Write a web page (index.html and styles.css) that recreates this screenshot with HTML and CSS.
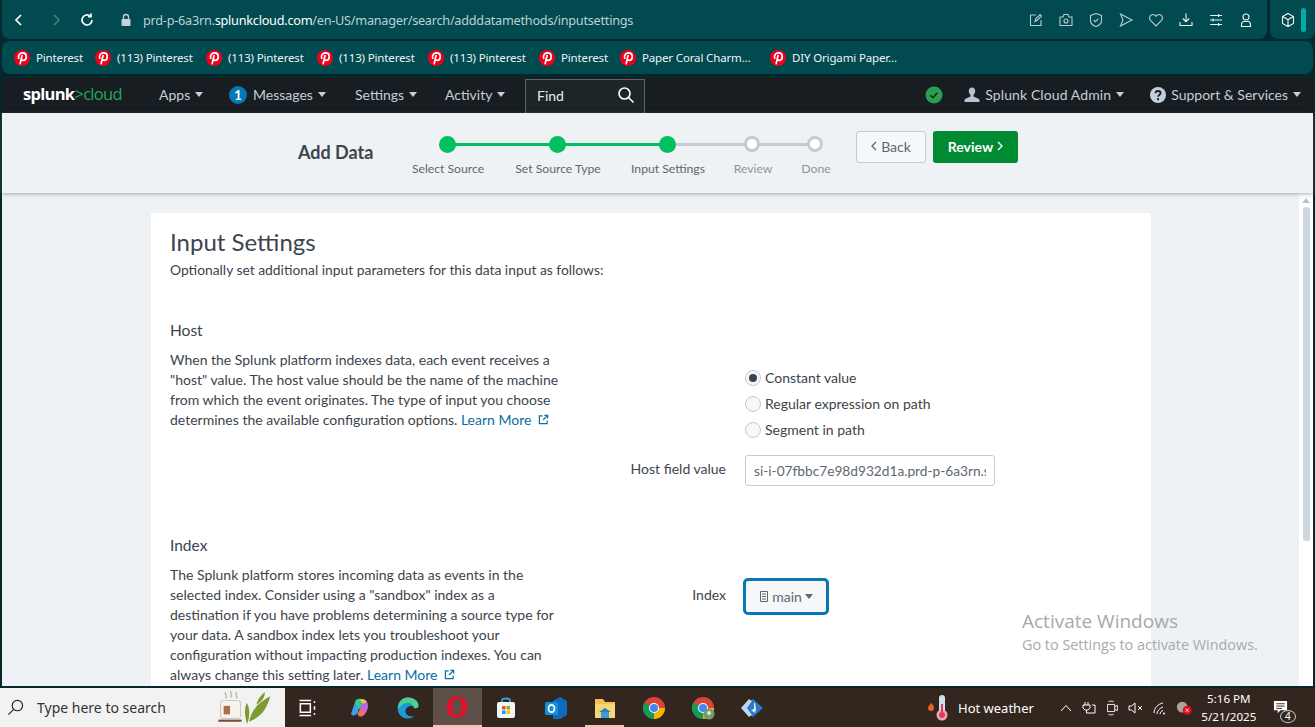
FILE: index.html
```html
<!DOCTYPE html>
<html lang="en">
<head>
<meta charset="utf-8">
<title>Add Data - Input Settings</title>
<link rel="stylesheet" href="styles.css">
</head>
<body>
<svg class="defs" width="0" height="0" aria-hidden="true">
  <symbol id="pin" viewBox="0 0 16 16">
    <circle cx="8" cy="8" r="8" fill="#f0001c"/>
    <path d="M4.700 8.200C3.700 5.200 5.900 2.900 8.400 2.900c2.300 0 3.800 1.500 3.800 3.500 0 2.300-1.400 3.900-3 3.900-1 0-1.600-.5-1.900-1.200M8 5.500 6.200 13.600" fill="none" stroke="#fff" stroke-width="1.700" stroke-linecap="round"/>
  </symbol>
  <symbol id="caret" viewBox="0 0 8 5"><path d="M0 0h8L4 5z" fill="currentColor"/></symbol>
</svg>

<header class="chrome-bar">
  <div class="chrome-main">
    <nav class="chrome-nav">
      <svg class="ci" viewBox="0 0 16 16"><path d="M10 3 5 8l5 5" stroke="#fff"/></svg>
      <svg class="ci ci-next" viewBox="0 0 16 16"><path d="m6 3 5 5-5 5" stroke="#4f7a7d"/></svg>
      <svg class="ci" viewBox="0 0 16 16"><path d="M13 8a5 5 0 1 1-1.600-3.700M12 1.600v3h-3" stroke="#fff"/></svg>
    </nav>
    <svg class="lock" viewBox="0 0 12 14"><path d="M3.500 6V4a2.500 2.500 0 0 1 5 0v2" fill="none" stroke="#c7d3d4" stroke-width="1.300"/><rect x="1.500" y="6" width="9" height="7" rx="1" fill="#c7d3d4"/></svg>
    <div class="url">prd-p-6a3rn.<b>splunkcloud.com</b>/en-US/manager/search/adddatamethods/inputsettings</div>
    <div class="chrome-tools">
      <svg class="ti" viewBox="0 0 16 16"><path d="M13 8v5.500H2.500V3H8M7 9.500l1-3L12 2.500l1.500 1.500-4 4z"/></svg>
      <svg class="ti" viewBox="0 0 16 16"><path d="M2 5h3l1-2.500h4L11 5h3v8.500H2z"/><circle cx="8" cy="9" r="2"/></svg>
      <svg class="ti" viewBox="0 0 16 16"><path d="M8 1.500 13.500 3.500v5c0 3-2.500 5-5.500 6-3-1-5.500-3-5.500-6v-5zM5.700 8l1.700 1.700 3-3"/></svg>
      <svg class="ti" viewBox="0 0 16 16"><path d="M2.500 2 14 8 2.500 14 5 8z"/></svg>
      <svg class="ti" viewBox="0 0 16 16"><path d="M8 14 2.500 8.500C.5 6 2 2.500 5 2.500c1.300 0 2.300.7 3 1.800.7-1.100 1.700-1.800 3-1.800 3 0 4.500 3.500 2.500 6z"/></svg>
      <svg class="ti ti-bright" viewBox="0 0 16 16"><path d="M8 1.500v8M4.800 6.500 8 9.700l3.200-3.200M2 10v3.500h12V10"/></svg>
      <svg class="ti ti-bright" viewBox="0 0 16 16"><path d="M2 3.500h12M2 8h12M2 12.500h12M10.500 2v3M5 6.500v3M10.500 11v3"/></svg>
      <svg class="ti ti-bright" viewBox="0 0 16 16"><circle cx="8" cy="5" r="3"/><path d="M3.500 14.500v-2c0-2 1.500-3 2.500-3h4c1 0 2.500 1 2.500 3v2z"/></svg>
    </div>
  </div>
  <div class="chrome-ext">
    <svg class="ti ti-bright" viewBox="0 0 16 16"><path d="M8 1.500 13.500 4.500v7L8 14.500l-5.500-3v-7zM2.500 4.500 8 7.500l5.500-3M8 7.500v7"/></svg>
    <span class="ext-bar"></span>
  </div>
</header>

<div class="bookmarks">
  <a class="bm bm-1"><svg class="pin"><use href="#pin"/></svg>Pinterest</a>
  <a class="bm bm-2"><svg class="pin"><use href="#pin"/></svg>(113) Pinterest</a>
  <a class="bm bm-2"><svg class="pin"><use href="#pin"/></svg>(113) Pinterest</a>
  <a class="bm bm-2"><svg class="pin"><use href="#pin"/></svg>(113) Pinterest</a>
  <a class="bm bm-2"><svg class="pin"><use href="#pin"/></svg>(113) Pinterest</a>
  <a class="bm bm-1"><svg class="pin"><use href="#pin"/></svg>Pinterest</a>
  <a class="bm bm-3"><svg class="pin"><use href="#pin"/></svg>Paper Coral Charm...</a>
  <a class="bm"><svg class="pin"><use href="#pin"/></svg>DIY Origami Paper...</a>
</div>

<nav class="splunk-nav">
  <div class="logo">splunk<span class="logo-g">&gt;cloud</span></div>
  <a class="nav-item nav-apps">Apps<svg class="caret"><use href="#caret"/></svg></a>
  <a class="nav-item nav-msg"><span class="badge">1</span>Messages<svg class="caret"><use href="#caret"/></svg></a>
  <a class="nav-item nav-set">Settings<svg class="caret"><use href="#caret"/></svg></a>
  <a class="nav-item nav-act">Activity<svg class="caret"><use href="#caret"/></svg></a>
  <div class="find"><span>Find</span>
    <svg class="find-icon" viewBox="0 0 18 18"><circle cx="7.500" cy="7.500" r="5.500"/><path d="m11.500 11.500 5 5"/></svg>
  </div>
  <div class="nav-right">
    <svg class="ok" viewBox="0 0 18 18"><circle cx="9" cy="9" r="8.500" fill="#28a04f"/><path d="m5.500 9.300 2.400 2.400 4.500-5" fill="none" stroke="#10241a" stroke-width="1.500"/></svg>
    <a class="nav-item nav-user"><svg class="user" viewBox="0 0 16 16"><path d="M8 .5c2 0 3.200 1.500 3.200 3.500 0 1.600-.8 3.200-1.700 4v1.500l5 2.200c.7.400 1 1 1 1.800v1.500H.5V13.500c0-.8.300-1.400 1-1.800l5-2.200V8c-.9-.8-1.700-2.400-1.700-4C4.800 2 6 .5 8 .5z" fill="#b5c3d2"/></svg>Splunk Cloud Admin<svg class="caret"><use href="#caret"/></svg></a>
    <a class="nav-item nav-sup"><svg class="help" viewBox="0 0 16 16"><circle cx="8" cy="8" r="8" fill="#c3cfdb"/><path d="M5.500 6.200C5.600 4.700 6.700 4 8 4c1.500 0 2.600.8 2.600 2.100 0 1.800-2.500 1.800-2.500 3.600" fill="none" stroke="#171d21" stroke-width="1.800"/><circle cx="8.100" cy="12.200" r="1.100" fill="#171d21"/></svg>Support &amp; Services<svg class="caret"><use href="#caret"/></svg></a>
  </div>
</nav>

<main class="viewport">
  <section class="wizard">
    <h1 class="wizard-title">Add Data</h1>
    <ol class="steps">
      <li class="step step-done step-a"><i class="dot"></i><span>Select Source</span></li>
      <li class="step step-done step-b"><i class="dot"></i><span>Set Source Type</span></li>
      <li class="step step-done step-c"><i class="dot"></i><span>Input Settings</span></li>
      <li class="step step-d"><i class="dot"></i><span>Review</span></li>
      <li class="step step-e"><i class="dot"></i><span>Done</span></li>
    </ol>
    <div class="wizard-btns">
      <button class="btn btn-back"><svg class="chev" viewBox="0 0 6 10"><path d="M5 1 1 5l4 4"/></svg>Back</button>
      <button class="btn btn-next">Review<svg class="chev" viewBox="0 0 6 10"><path d="m1 1 4 4-4 4"/></svg></button>
    </div>
  </section>

  <div class="scroller">
    <article class="card">
      <h2 class="page-title">Input Settings</h2>
      <p class="page-sub">Optionally set additional input parameters for this data input as follows:</p>

      <section class="sec sec-host">
        <div class="sec-text">
          <h3>Host</h3>
          <p>When the Splunk platform indexes data, each event receives a "host" value. The host value should be the name of the machine from which the event originates. The type of input you choose determines the available configuration options. <a class="more">Learn More <svg class="ext" viewBox="0 0 12 12"><path d="M5 2H1.500v8.500H10V7M7 1.500h3.500V5M10.500 1.500 5.500 6.500"/></svg></a></p>
        </div>
        <div class="sec-ctl host-ctl">
          <label class="radio"><i class="rd rd-on"></i>Constant value</label>
          <label class="radio"><i class="rd"></i>Regular expression on path</label>
          <label class="radio"><i class="rd"></i>Segment in path</label>
          <div class="field host-field"><span class="field-label">Host field value</span><div class="input"><span class="input-text">si-i-07fbbc7e98d932d1a.prd-p-6a3rn.s</span></div></div>
        </div>
      </section>

      <section class="sec sec-index">
        <div class="sec-text">
          <h3>Index</h3>
          <p>The Splunk platform stores incoming data as events in the selected index. Consider using a "sandbox" index as a destination if you have problems determining a source type for your data. A sandbox index lets you troubleshoot your configuration without impacting production indexes. You can always change this setting later. <a class="more">Learn More <svg class="ext" viewBox="0 0 12 12"><path d="M5 2H1.500v8.500H10V7M7 1.500h3.500V5M10.500 1.500 5.500 6.500"/></svg></a></p>
        </div>
        <div class="sec-ctl">
          <div class="field"><span class="field-label">Index</span>
            <button class="select"><svg class="db" viewBox="0 0 10 11"><path d="M1.500.5h7v10h-7zM3 3h4M3 5.500h4M3 8h4"/></svg>main<svg class="caret caret-dark"><use href="#caret"/></svg></button>
          </div>
        </div>
      </section>
    </article>
    <div class="scrollbar"><svg class="sb-up" viewBox="0 0 8 5"><path d="M0 5 4 0l4 5z"/></svg><span class="sb-thumb"></span></div>
  </div>
  <div class="watermark"><div class="wm-1">Activate Windows</div><div class="wm-2">Go to Settings to activate Windows.</div></div>
</main>

<footer class="taskbar">
  <div class="search">
    <svg class="search-ic" viewBox="0 0 18 18"><circle cx="11" cy="7" r="5.500"/><path d="M7 11 1.500 16.500"/></svg>
    <span>Type here to search</span>
    <svg class="tea" viewBox="0 0 56 34"><path d="M7 2c-2 2 2 3 0 6M12 1c-2 2 2 3 0 6M17 2c-2 2 2 3 0 6" fill="none" stroke="#b5b0a8" stroke-width="1.200"/><rect x="2" y="10" width="19" height="17" rx="3" fill="#f6f3ee" stroke="#cfc8bd"/><rect x="5" y="15" width="6" height="8" fill="#a8714b"/><rect x="0" y="28" width="22" height="2" fill="#7a4c34"/><path d="M27 32c-2-8-3-14 0-20 3 6 3 13 0 20zM29 30c2-10 8-18 20-24-3 12-9 20-20 24zM36 14c1-4 3-8 8-12 0 5-3 9-8 12z" fill="#7f9a2e"/></svg>
  </div>
  <div class="tb-apps">
    <span class="tb-app"><svg class="tb-ic tb-view" viewBox="0 0 24 24"><path d="M3 3h14M3 21h14M4 7h12v10H4zM21 4v2M21 10v4M21 18v2" fill="none" stroke="#fff" stroke-width="1.800"/></svg></span>
    <span class="tb-app"><svg class="tb-ic" viewBox="0 0 24 24"><path d="M4 18 8 6c1-3 4-4 6-3l-3 13c-1 3-5 5-7 2z" fill="#3aa0e8"/><path d="M8 6c1-3 4-4 6-3l3 1-5 10z" fill="#38c98a"/><path d="M20 6c2 3 1 9-3 13-2 2-5 2-6 0l4-13c1-2 4-2 5 0z" fill="#c064e0"/><path d="M11 19c-1-2 0-4 3-5l5 1c-1 3-4 7-8 4z" fill="#f2705a"/><path d="M13 4c2-2 5-1 7 2l-4 2z" fill="#e8c53a"/></svg></span>
    <span class="tb-app"><svg class="tb-ic" viewBox="0 0 24 24"><path d="M12 1.500C5.500 1.500 1.500 6.500 1.500 12c0 6 4.500 10.500 10 10.500 3 0 5-.8 7-2.500-5 1.500-9-1-9-5 0-3 2.500-5 6-5 3 0 6.800 1.500 7-1C22.500 5 17.500 1.500 12 1.500z" fill="#1c9ad6"/><path d="M12 1.500c5.500 0 10.500 3.500 10.500 8.500 0 2-2.500 2.500-4.500 2-1-4-4-6-8-5-3 .7-6 3-7.500 6-.5-6 3.500-11.500 9.500-11.500z" fill="#4fd08a"/></svg></span>
    <span class="tb-app tb-active"><svg class="tb-ic" viewBox="0 0 24 24"><ellipse cx="12" cy="12" rx="10.500" ry="11" fill="#e0112b"/><ellipse cx="12" cy="12" rx="4.500" ry="8.500" fill="#5c5048"/></svg></span>
    <span class="tb-app"><svg class="tb-ic" viewBox="0 0 24 24"><path d="M8 7V4c0-2 8-2 8 0v3" fill="none" stroke="#29a9e0" stroke-width="1.800"/><rect x="3" y="6" width="18" height="16" rx="2" fill="#f4f4f4"/><rect x="8" y="10" width="3.500" height="3.500" fill="#f25022"/><rect x="12.500" y="10" width="3.500" height="3.500" fill="#7fba00"/><rect x="8" y="14.500" width="3.500" height="3.500" fill="#00a4ef"/><rect x="12.500" y="14.500" width="3.500" height="3.500" fill="#ffb900"/></svg></span>
    <span class="tb-app"><svg class="tb-ic" viewBox="0 0 24 24"><path d="M9 5 16 1l7 4v14l-7 4H9z" fill="#0f6cbd"/><rect x="1" y="6" width="13" height="13" rx="1.500" fill="#1490df"/><ellipse cx="7.500" cy="12.500" rx="3" ry="3.700" fill="none" stroke="#fff" stroke-width="1.700"/></svg></span>
    <span class="tb-app tb-running"><svg class="tb-ic" viewBox="0 0 24 24"><path d="M2 3h8l2 3h10v16H2z" fill="#f2c14e"/><rect x="2" y="8" width="20" height="14" fill="#f7d774"/><path d="M8 16h8v6H8z" fill="#3b9be0"/><path d="M6 16l6-4 6 4z" fill="#2a7fc0"/></svg></span>
    <span class="tb-app"><svg class="tb-ic" viewBox="0 0 24 24"><circle cx="12" cy="12" r="11" fill="#db4437"/><path d="M12 23A11 11 0 0 1 2.500 6.500L12 12z" fill="#0f9d58"/><path d="M12 12h11A11 11 0 0 1 12 23z" fill="#f4b400"/><circle cx="12" cy="12" r="5" fill="#fff"/><circle cx="12" cy="12" r="4" fill="#4285f4"/></svg></span>
    <span class="tb-app"><svg class="tb-ic" viewBox="0 0 24 24"><circle cx="12" cy="12" r="11" fill="#db4437"/><path d="M12 23A11 11 0 0 1 2.500 6.500L12 12z" fill="#0f9d58"/><path d="M12 12h11A11 11 0 0 1 12 23z" fill="#f4b400"/><circle cx="12" cy="12" r="5" fill="#fff"/><circle cx="12" cy="12" r="4" fill="#4285f4"/><circle cx="18" cy="18" r="5.500" fill="#6f9e6f"/><circle cx="18" cy="17" r="2" fill="#dfeadf"/></svg></span>
    <span class="tb-app"><svg class="tb-ic" viewBox="0 0 24 24"><path d="M13 3 23 12l-10 9-10-9z" fill="#2a78c8"/><path d="M9 3 1 12l8 9 3-2-5-7 5-7z" fill="#bcd6ee"/><path d="M14 7v6l-3 1 4 3 1-4-1-6z" fill="#dcebf7"/></svg></span>
  </div>
  <div class="weather">
    <svg class="therm" viewBox="0 0 22 28"><path d="M4 9c2 2 3 3 3 5a3 3 0 0 1-6 0c0-2 2-3 3-5z" fill="#e8622c"/><rect x="12" y="1" width="6" height="20" rx="3" fill="#cfe0ee"/><circle cx="15" cy="21" r="5.500" fill="#f2a7b5"/><circle cx="15" cy="21" r="3" fill="#e23c5a"/><rect x="14" y="10" width="2" height="10" fill="#e23c5a"/></svg>
    <span>Hot weather</span>
  </div>
  <div class="tray">
    <svg class="tr tr-chev" viewBox="0 0 12 8"><path d="M1 7 6 1.500 11 7"/></svg>
    <svg class="tr" viewBox="0 0 16 14"><path d="M5 1v3M8 1v3M3 4h7v3L8 9H5L3 7zM6.500 9v3H15V4h-3"/></svg>
    <svg class="tr" viewBox="0 0 16 18"><path d="M3 5h8v8H3zM11 7.500l3-1.500v6l-3-1.500M4 2c2-1 4-1 6 0M4 16c2 1 4 1 6 0"/></svg>
    <svg class="tr" viewBox="0 0 16 14"><path d="M1 5h2.500L7 2v10L3.500 9H1zM10 5l4 4M14 5l-4 4"/></svg>
    <svg class="tr tr-wifi" viewBox="0 0 16 14"><path d="M2 12C2 7 6 3 11 2M5 13c0-3 3-6 6-7M8 13c0-1.500 1.500-3 3-3.500"/><circle cx="12" cy="12.500" r="1" fill="#fff"/></svg>
    <svg class="tr tr-net" viewBox="0 0 18 16"><circle cx="7" cy="7" r="6" fill="#a9a6a3" stroke="none"/><circle cx="12.500" cy="10.500" r="5" fill="#e81123" stroke="none"/><path d="m10.800 8.800 3.400 3.400M14.200 8.800l-3.400 3.400" stroke="#fff"/></svg>
  </div>
  <div class="clock"><div>5:16 PM</div><div>5/21/2025</div></div>
  <div class="notif">
    <svg class="notif-ic" viewBox="0 0 16 16"><path d="M1 1h14v10H8l-3 3v-3H1z" fill="#fff"/><path d="M3.500 4h9M3.500 6.500h9M3.500 9h6" stroke="#33261f"/></svg>
    <span class="notif-n">4</span>
  </div>
</footer>
</body>
</html>
```
FILE: styles.css
```css
* { box-sizing: border-box; }
html, body { margin: 0; padding: 0; }
body {
  width: 1315px; height: 727px; overflow: hidden;
  background: #06282c;
  font-family: "Open Sans", "Liberation Sans", sans-serif;
  display: flex; flex-direction: column; position: relative;
}
.defs { position: absolute; }
a { color: inherit; text-decoration: none; }

/* browser chrome */
.chrome-bar { height: 39px; margin: 0 0 2px 2px; flex: none; display: flex; gap: 3px; color: #c9d6d7; }
.chrome-main { flex: 1; min-width: 0; display: flex; align-items: center; background: #004a50; border-radius: 0 0 8px 8px; }
.chrome-nav { display: flex; margin-left: 9px; width: 108px; flex: none; }
.ci { width: 16px; height: 16px; flex: none; }
.ci-next { margin: 0 15px 0 21px; }
.ci path { fill: none; stroke-width: 1.700; }
.lock { width: 12px; height: 14px; margin-left: 1px; flex: none; }
.url { margin-left: 11px; font-size: 12.700px; color: #bfd0d1; white-space: nowrap; font-family: "Noto Sans", sans-serif; letter-spacing: -.25px; flex: 1; }
.url b { font-weight: 400; color: #fff; }
.chrome-tools { display: flex; gap: 14px; margin-right: 13px; flex: none; }
.ti { width: 16px; height: 16px; flex: none; }
.ti path, .ti circle { fill: none; stroke: #bccbcc; stroke-width: 1.100; }
.ti-bright path, .ti-bright circle { stroke: #eef4f4; }
.chrome-ext {
  width: 45px; height: 39px; background: #004a50; border-radius: 0 0 8px 8px;
  display: flex; align-items: center; gap: 5px; padding-left: 10px; flex: none;
}
.ext-bar { width: 5px; height: 24px; border-radius: 3px; background: #06aaa5; }

.bookmarks {
  height: 33px; margin: 0 2px 0 2px; padding-left: 12px; flex: none;
  display: flex; align-items: center; border-radius: 8px;
  background: #004a50; color: #eef4f4; font-size: 11.500px; letter-spacing: -.15px; white-space: nowrap;
  font-family: "Noto Sans", sans-serif;
}
.bm { display: flex; align-items: center; gap: 6px; width: 111px; flex: none; }
.bm-1 { width: 81px; }
.bm-3 { width: 150px; }
.pin { width: 16px; height: 16px; flex: none; }

/* splunk nav */
.splunk-nav {
  height: 35px; margin: 4px 2px 0 2px; padding: 0 0 2px 21px; flex: none;
  display: flex; align-items: center; position: relative;
  background: #171d21; color: #c3cfdb; font-family: "Lato", sans-serif; font-size: 14px;
  border-radius: 4px 4px 0 0;
}
.logo { width: 136px; font-size: 16.500px; font-weight: 700; color: #fff; letter-spacing: -.7px; flex: none; font-family: "Open Sans", sans-serif; margin-bottom: 2px; }
.logo-g { color: #1faa5a; font-weight: 400; }
.nav-item { display: flex; align-items: center; gap: 5px; white-space: nowrap; flex: none; }
.nav-apps { width: 70px; }
.nav-msg { width: 126px; }
.nav-set { width: 90px; }
.nav-act { width: 80px; }
.caret { width: 8px; height: 5px; color: #c3cfdb; flex: none; }
.badge {
  width: 18px; height: 18px; margin-right: 1px; border-radius: 50%; background: #0877b6; color: #fff;
  display: flex; align-items: center; justify-content: center; font-size: 13px; font-weight: 700;
}
.find {
  width: 120px; height: 34px; margin-bottom: -2px; padding: 0 9px 2px 11px; border: 1px solid #59636b; border-bottom: 0; background: #1e2529; color: #e6ebef;
  display: flex; align-items: center; justify-content: space-between; flex: none;
}
.find-icon { width: 18px; height: 18px; }
.find-icon circle, .find-icon path { fill: none; stroke: #fff; stroke-width: 1.600; }
.nav-right { margin-left: auto; display: flex; align-items: center; padding-right: 12px; }
.ok { width: 18px; height: 18px; margin-right: 21px; }
.nav-user { margin-right: 26px; gap: 5px; letter-spacing: .1px; }
.nav-sup { gap: 5px; }
.user { width: 16px; height: 16px; }
.help { width: 16px; height: 16px; }

/* wizard */
.viewport { flex: 1; min-height: 0; margin: 0 2px 0 2px; display: flex; flex-direction: column; position: relative; background: #eff2f4; font-family: "Lato", sans-serif; }
.wizard {
  height: 80px; flex: none; position: relative; z-index: 1; padding-left: 296px;
  display: flex; align-items: flex-start; background: #eff2f4; box-shadow: 0 1px 4px rgba(90,110,125,.55);
}
.wizard-title { margin: 28px 0 0 0; width: 110px; flex: none; font-size: 18px; font-weight: 700; color: #3c444d; }
.steps { list-style: none; margin: 0 0 0 39px; padding: 0; height: 80px; width: 368px; display: flex; flex: none; position: relative; }
.step { position: relative; flex: none; color: #5c6773; font-size: 12.200px; }
.step span { white-space: nowrap; position: absolute; top: 48px; left: 1px; transform: translateX(-50%); }
.dot { position: absolute; top: 23px; left: 0; width: 17px; height: 17px; margin-left: -8px; border-radius: 50%; background: #00c060; z-index: 1; }
.step::before { content: ""; position: absolute; top: 30px; left: 0; width: 100%; height: 3px; background: #c3cbd4; }
.step-a, .step-b { width: 110px; }
.step-c { width: 85px; }
.step-d { width: 63px; }
.step-e { width: 0; }
.step-a::before, .step-b::before { background: #00c060; }
.step-e::before { display: none; }
.step-d .dot, .step-e .dot { background: #fff; border: 3px solid #c3cbd4; width: 16px; height: 16px; }
.step-d, .step-e { color: #8a95a0; }
.wizard-btns { display: flex; gap: 7px; margin-top: 18px; margin-left: 41px; }
.btn { height: 32px; border-radius: 3px; font: inherit; font-size: 14px; display: flex; align-items: center; justify-content: center; gap: 4px; padding: 0 0 2px 0; }
.btn-back { width: 70px; border: 1px solid #c3cbd4; background: #f5f7f9; color: #5c6773; }
.btn-next { width: 85px; border: 0; background: #008a32; color: #fff; font-weight: 700; }
.chev { width: 6px; height: 10px; }
.chev path { fill: none; stroke: currentColor; stroke-width: 1.300; }

/* content */
.scroller { flex: 1; min-height: 0; display: flex; padding-left: 149px; padding-top: 20px; overflow: hidden; position: relative; }
.card { width: 1000px; flex: none; height: 700px; background: #fff; padding: 14px 20px 0 19px; color: #3c444d; font-size: 14px; line-height: 20px; }
.page-title { margin: 0; font-size: 24px; line-height: 30px; font-weight: 400; color: #3c444d; }
.page-sub { margin: 3px 0 0 0; font-size: 13.850px; }
.sec { display: flex; margin-top: 38px; }
.sec-text { width: 395px; flex: none; }
.sec h3 { margin: 0 0 8px 0; font-size: 15.500px; line-height: 24px; font-weight: 400; }
.sec p { margin: 0; }
.more { color: #0a6ea3; white-space: nowrap; }
.ext { width: 11px; height: 11px; margin-left: 3px; }
.ext path { fill: none; stroke: #0a6ea3; stroke-width: 1.300; }
.sec-ctl { margin-left: 180px; }
.host-ctl { padding-top: 47px; }
.radio { display: flex; align-items: center; gap: 4px; height: 26px; }
.rd { width: 16px; height: 16px; border-radius: 50%; border: 1px solid #c3cbd4; background: #f5f7f9; flex: none; position: relative; }
.rd-on::after { content: ""; position: absolute; inset: 3px; border-radius: 50%; background: #3c444d; }
.field { display: flex; align-items: center; position: relative; }
.field-label { position: absolute; right: 100%; margin-right: 19px; white-space: nowrap; transform: translateY(-2px); }
.host-field { margin-top: 12px; }
.input { width: 250px; height: 31px; border: 1px solid #c3cbd4; border-radius: 3px; padding: 0 8px; line-height: 29px; color: #5c6773; background: #fff; font-size: 13.700px; }
.input-text { display: block; overflow: hidden; white-space: nowrap; }
.sec-index { margin-top: 47px; }
.sec-index .sec-ctl { padding-top: 45px; }
.select { width: 86px; height: 37px; margin-left: -2px; border: 3px solid #0877b6; border-radius: 5px; background: #f5f7f9; color: #5c6773; font: inherit; display: flex; align-items: center; justify-content: center; gap: 3px; padding: 0; }
.db { width: 10px; height: 11px; }
.db path { fill: none; stroke: #5c6773; stroke-width: 1; }
.caret-dark { color: #5c6773; }
.scrollbar { position: absolute; right: 0; top: 0; bottom: 0; width: 14px; padding-right: 3px; background: #fff; display: flex; flex-direction: column; align-items: flex-end; }
.sb-up { width: 8px; height: 5px; margin-top: 5px; fill: #b9c1c8; flex: none; }
.sb-thumb { display: block; width: 7px; height: 334px; margin-top: 4px; border-radius: 3px 3px 2px 2px; background: #cdd9e2; }
.watermark { position: absolute; left: 1020px; top: 496px; color: #a4aaae; pointer-events: none; font-family: "Open Sans", sans-serif; }
.wm-1 { font-size: 19px; line-height: 25px; }
.wm-2 { font-size: 14.400px; line-height: 21px; }

/* taskbar */
.taskbar { height: 41px; flex: none; display: flex; align-items: center; background: #33261f; color: #fff; font-family: "Noto Sans", sans-serif; border-top: 2px solid #06282c; }
.search { padding-left: 7px; width: 285px; height: 39px; background: #f2f2f2; color: #333; display: flex; align-items: center; font-size: 14px; flex: none; }
.search-ic { width: 17px; height: 17px; margin-right: 13px; }
.search-ic circle, .search-ic path { fill: none; stroke: #222; stroke-width: 1.200; }
.tea { width: 60px; height: 36px; margin-left: auto; margin-right: 7px; }
.tb-apps { display: flex; flex: none; width: 494px; }
.tb-app { width: 49.200px; height: 39px; display: flex; align-items: center; justify-content: center; flex: none; position: relative; }
.tb-ic { width: 24px; height: 24px; }
.tb-view { width: 20px; height: 20px; margin-right: 5px; }
.tb-active { background: #5c5048; border-bottom: 2px solid #f4c2ae; }
.tb-running::after { content: ""; position: absolute; left: 5px; right: 5px; bottom: 0; height: 2px; background: #f4c2ae; }
.weather { display: flex; align-items: center; gap: 9px; margin-left: 148px; font-size: 13px; white-space: nowrap; flex: none; }
.therm { width: 22px; height: 28px; }
.tray { display: flex; align-items: center; gap: 8px; margin-left: 26px; flex: none; }
.tr { width: 16px; height: 16px; }
.tr path { fill: none; stroke: #fff; stroke-width: 1; }
.tr-chev { width: 12px; }
.clock { width: 58px; text-align: center; font-size: 11.600px; line-height: 18px; flex: none; margin-left: 8px; }
.notif { position: relative; width: 30px; height: 30px; margin-left: 14px; flex: none; }
.notif-ic { width: 17px; height: 15px; position: absolute; left: 0; top: 7px; }
.notif-n { position: absolute; left: 8px; top: 17px; width: 16px; height: 13px; border-radius: 50%; border: 1px solid #ccc; background: #33261f; font-size: 10px; line-height: 11px; text-align: center; }
```
